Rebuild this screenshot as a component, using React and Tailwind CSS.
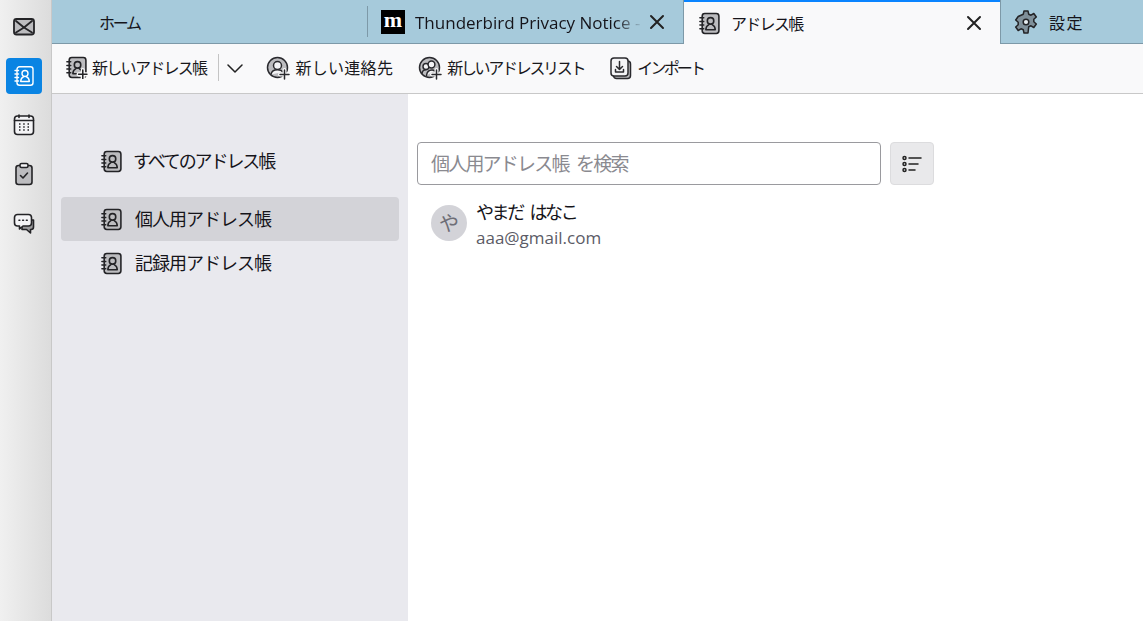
import React from "react";

const jp = "font-['Noto_Sans_CJK_JP','Noto_Sans',sans-serif]";

const Book = ({ plus, fill = "#bcbcbf", stroke = "#232326" }) => (
  <svg width="23" height="23" viewBox="0 0 22 22" fill="none" stroke={stroke} strokeWidth="1.5" strokeLinecap="round" strokeLinejoin="round">
    <rect x="4" y="1.500" width="16" height="19" rx="2.500" fill={fill} />
    <path d="M1.800 5.500h3.700M1.800 9h3.700M1.800 12.500h3.700M1.800 16h3.700" strokeWidth="1.400" />
    <circle cx="12" cy="8.500" r="3.100" />
    <path d="M7.500 17c0-2.800 1-4 3-4.900M16.500 17c0-2.800-1-4-3-4.900M7.500 17h9" />
    {plus && <path d="M17 13.500v8M13 17.500h8" stroke="#f9f9fa" strokeWidth="4" />}
    {plus && <path d="M17 13.500v8M13 17.500h8" stroke="#232326" strokeWidth="1.500" />}
  </svg>
);

const NavIcon = ({ children, active }) => (
  <div className={`flex h-9 w-9 items-center justify-center rounded ${active ? "bg-[#0a84e3]" : ""}`}>{children}</div>
);

const ToolButton = ({ icon, label, className = "", textClass = "" }) => (
  <div className={`flex items-center ${className}`}>
    {icon}
    <span className={`${jp} -translate-y-px text-[16px] text-[#18181b] whitespace-nowrap ${textClass}`}>{label}</span>
  </div>
);

const ContactIcon = () => (
  <svg width="24" height="24" viewBox="0 0 24 24" fill="none" stroke="#2a2a2e" strokeWidth="1.500" strokeLinecap="round">
    <circle cx="11.500" cy="11.500" r="10" fill="#bcbcbf" />
    <circle cx="11.500" cy="9.500" r="4" fill="#f4f4f6" />
    <path d="M5 18.500c.5-3 2.800-4.800 6.500-4.800s4.500.8 5.500 2.300" fill="#f4f4f6" />
    <path d="M18.500 14v9M14 18.500h9" stroke="#f9f9fa" strokeWidth="4" />
    <path d="M18.500 14v9M14 18.500h9" strokeWidth="1.500" />
  </svg>
);

const ListIcon = () => (
  <svg width="24" height="24" viewBox="0 0 24 24" fill="none" stroke="#2a2a2e" strokeWidth="1.500" strokeLinecap="round">
    <circle cx="11.500" cy="11.500" r="10" fill="#bcbcbf" />
    <circle cx="8" cy="10.500" r="3" fill="#f4f4f6" />
    <circle cx="13.500" cy="8.500" r="3.400" fill="#f4f4f6" />
    <path d="M4 17.500c.4-2.500 2-3.800 4-3.800M8.500 19.500c.4-3.500 2.300-5.500 5.500-5.500 1 0 2 .2 2.500.8" fill="#f4f4f6" />
    <path d="M18.500 14v9M14 18.500h9" stroke="#f9f9fa" strokeWidth="4" />
    <path d="M18.500 14v9M14 18.500h9" strokeWidth="1.500" />
  </svg>
);

const ImportIcon = () => (
  <svg width="24" height="24" viewBox="0 0 24 24" fill="none" stroke="#2a2a2e" strokeWidth="1.500" strokeLinecap="round" strokeLinejoin="round">
    <rect x="4.500" y="5" width="17" height="17.500" rx="3" fill="#bcbcbf" />
    <rect x="2" y="2" width="17" height="18" rx="3" fill="#f4f4f6" />
    <path d="M10.500 5.500v8M7.500 10.500l3 3 3-3M6.500 13.500v2.500h8v-2.500" />
  </svg>
);

const Close = () => (
  <svg width="16" height="16" viewBox="0 0 16 16" stroke="#222" strokeWidth="2" strokeLinecap="round">
    <path d="M2 2l12 12M14 2L2 14" />
  </svg>
);

const AddressRow = ({ label, selected, className = "", textClass = "" }) => (
  <div className={`flex h-11 items-center gap-[12px] rounded pl-[39px] ${selected ? "bg-[#d3d3d8]" : ""} ${className}`}>
    <Book />
    <span className={`${jp} -translate-y-px text-[18px] text-[#15141a] whitespace-nowrap ${textClass}`}>{label}</span>
  </div>
);

export default function App() {
  return (
    <div className="flex h-[621px] w-[1143px] overflow-hidden bg-white">
      {/* spaces toolbar */}
      <div className="flex w-[52px] shrink-0 flex-col items-center border-r border-[#c8c8c8] bg-gradient-to-r from-[#f0f0f0] to-[#dcdcdc] pr-[3px] pt-[9px]">
        <div className="flex h-9 w-9 items-center justify-center">
          <svg width="24" height="20" viewBox="0 0 24 20" fill="#bcbcbf" stroke="#232326" strokeWidth="1.800" strokeLinecap="round">
            <rect x="2" y="2" width="20" height="15.500" rx="2.500" />
            <path d="M4 4l8 6.500L20 4M4 15.500l8-5 8 5" fill="none" />
          </svg>
        </div>
        <div className="mt-[13px]">
          <NavIcon active>
            <svg width="22" height="22" viewBox="0 0 22 22" fill="none" stroke="#fff" strokeWidth="1.400" strokeLinecap="round">
              <rect x="4" y="1.800" width="16" height="18.400" rx="2.500" />
              <path d="M2 5.500h3.500M2 9h3.500M2 12.500h3.500M2 16h3.500" />
              <circle cx="12" cy="8.500" r="3" />
              <path d="M7.700 16.500c0-2.600 1-3.800 2.800-4.600M16.300 16.500c0-2.600-1-3.800-2.800-4.600M7.700 16.500h8.600" />
            </svg>
          </NavIcon>
        </div>
        <div className="mt-[13px]">
          <NavIcon>
            <svg width="22" height="22" viewBox="0 0 22 22" fill="#f4f4f6" stroke="#232326" strokeWidth="1.600" strokeLinecap="round">
              <rect x="1.500" y="2" width="19" height="18.500" rx="3" />
              <path d="M1.500 6.500h19M6 1v2.500M16 1v2.500" />
              <path d="M6 10h1.500M10.200 10h1.500M14.500 10h1.500M6 13h1.500M10.200 13h1.500M14.500 13h1.500M6 16h1.500M10.200 16h1.500M14.500 16h1.500" strokeWidth="1.700" strokeLinecap="butt" />
            </svg>
          </NavIcon>
        </div>
        <div className="mt-[13px]">
          <NavIcon>
            <svg width="20" height="24" viewBox="0 0 20 24" fill="#bcbcbf" stroke="#232326" strokeWidth="1.600" strokeLinecap="round" strokeLinejoin="round">
              <rect x="2" y="3.500" width="16" height="19" rx="2.500" />
              <rect x="6" y="1.500" width="8" height="4" rx="1.500" fill="#f4f4f6" />
              <path d="M6.500 13.500l2.500 2.500 4.500-5" fill="none" />
            </svg>
          </NavIcon>
        </div>
        <div className="mt-[13px]">
          <NavIcon>
            <svg width="22" height="22" viewBox="0 0 22 22" fill="#f4f4f6" stroke="#232326" strokeWidth="1.600" strokeLinecap="round" strokeLinejoin="round">
              <path d="M20.500 8v7c0 1.500-1 2.500-2.500 2.500h-.5V21l-4-3.500H9V8z" fill="#9a9a9c" />
              <path d="M4.500 2.500h11c1.700 0 3 1.200 3 3V11c0 1.700-1.300 3-3 3H10l-3.500 3v-3h-2c-1.700 0-3-1.300-3-3V5.500c0-1.800 1.300-3 3-3z" />
              <path d="M6 8.300h.8M9.700 8.300h.8M13.400 8.300h.8" strokeWidth="1.600" />
            </svg>
          </NavIcon>
        </div>
      </div>

      <div className="flex min-w-0 flex-1 flex-col">
        {/* tabs */}
        <div className="flex h-11 shrink-0 items-stretch bg-[#a6cadb]">
          <div className="flex w-[316px] items-center border-b border-[#7d99a8] pl-[47px]">
            <span className={`${jp} text-[16px] tracking-[-2.2px] text-[#15141a]`}>ホーム</span>
            <div className="ml-auto h-[31px] w-px bg-[#7d99a8]" />
          </div>
          <div className="flex w-[316px] items-center border-b border-r border-[#7d99a8] pl-[13px] pr-[18px]">
            <div className="flex h-6 w-6 shrink-0 items-center justify-center bg-black font-['Liberation_Serif',serif] text-[22px] font-bold leading-none text-white">
              <span className="-mt-1">m</span>
            </div>
            <span className="ml-[10px] mt-[3px] w-[228px] whitespace-nowrap font-['Open_Sans',sans-serif] text-[17px] text-[#15141a] [mask-image:linear-gradient(to_right,black_88%,transparent)]">
              Thunderbird Privacy Notice -
            </span>
            <div className="ml-auto"><Close /></div>
          </div>
          <div className="flex w-[316px] items-center border-t-2 border-[#0a84ff] bg-[#f9f9fa] pl-[14px] pr-[18px]">
            <Book />
            <span className={`${jp} ml-[10px] text-[16px] tracking-[-1.700px] text-[#15141a]`}>アドレス帳</span>
            <div className="ml-auto"><Close /></div>
          </div>
          <div className="flex flex-1 items-center gap-[11px] border-b border-l border-[#7d99a8] pl-[13px]">
            <svg width="24" height="24" viewBox="0 0 24 24" fill="#7f8f99" stroke="#232326" strokeWidth="1.500" strokeLinejoin="round">
              <path d="M10 1h4l.7 3.200 2.300 1 2.800-1.700 2.500 3.500-2.500 2.200v2.600l2.500 2.200-2.500 3.500-2.800-1.700-2.300 1L14 23h-4l-.7-3.200-2.300-1-2.800 1.700-2.500-3.500 2.500-2.200V12.200L1.700 10l2.500-3.500L7 5.200l2.300-1z" />
              <circle cx="12" cy="12" r="2.800" fill="#e8eef2" />
            </svg>
            <span className={`${jp} text-[16px] tracking-[1.500px] text-[#15141a]`}>設定</span>
          </div>
        </div>

        {/* toolbar */}
        <div className="flex h-[50px] shrink-0 items-center border-b border-[#c8c8c8] bg-[#f9f9fa] pb-[2px] pl-[13px]">
          <ToolButton icon={<Book plus />} label="新しいアドレス帳" className="gap-[4px]" textClass="tracking-[-1.700px]" />
          <div className="ml-[12px] h-[27px] w-px bg-[#c4c4c4]" />
          <svg className="ml-[8px]" width="16" height="16" viewBox="0 0 16 16" fill="none" stroke="#222" strokeWidth="1.500" strokeLinecap="round" strokeLinejoin="round">
            <path d="M1 5l7 7 7-7" />
          </svg>
          <ToolButton className="ml-[23px] gap-[5px]" icon={<ContactIcon />} label="新しい連絡先" textClass="tracking-[0.300px]" />
          <ToolButton className="ml-[25px] gap-[5px]" icon={<ListIcon />} label="新しいアドレスリスト" textClass="tracking-[-2.300px]" />
          <ToolButton className="ml-[25px] gap-[4px]" icon={<ImportIcon />} label="インポート" textClass="tracking-[-2.800px]" />
        </div>

        <div className="flex min-h-0 flex-1">
          {/* address books */}
          <div className="w-[356px] shrink-0 bg-[#e9e9ee] pl-[9px] pr-[9px] pt-[45px]">
            <AddressRow label="すべてのアドレス帳" textClass="-ml-[2px] tracking-[-2.100px]" />
            <AddressRow className="mt-[14px]" label="個人用アドレス帳" selected textClass="tracking-[-1px]" />
            <AddressRow label="記録用アドレス帳" textClass="tracking-[-1px]" />
          </div>

          {/* contacts */}
          <div className="flex-1 bg-white pl-[9px] pt-[48px]">
            <div className="flex items-center gap-[9px]">
              <div className={`${jp} flex h-[43px] w-[464px] items-center rounded-[4px] border border-[#9a9a9e] pl-[13px] text-[19px] tracking-[-1.800px] [word-spacing:5px] text-[#8a8a90]`}>
                個人用アドレス帳 を検索
              </div>
              <div className="flex h-[43px] w-[44px] items-center justify-center rounded-[4px] border border-[#dcdcde] bg-[#e9e9eb]">
                <svg width="20" height="18" viewBox="0 0 20 18" fill="none" stroke="#222" strokeWidth="1.500" strokeLinecap="round">
                  <circle cx="2.500" cy="3" r="1.500" />
                  <circle cx="2.500" cy="9" r="1.500" />
                  <circle cx="2.500" cy="15" r="1.500" />
                  <path d="M7 3h12M7 9h9M7 15h6" />
                </svg>
              </div>
            </div>
            <div className="mt-[12px] flex items-start pl-[14px]">
              <div className={`${jp} mt-[8px] flex h-9 w-9 items-center justify-center rounded-full bg-[#d3d3d8] text-[20px] text-[#6e6e76]`}>や</div>
              <div className="ml-[10px] mt-[1px]">
                <div className={`${jp} -ml-px text-[18px] leading-[26px] tracking-[-2.400px] [word-spacing:5px] text-[#15141a]`}>やまだ はなこ</div>
                <div className="-ml-px mt-[1px] font-['Open_Sans',sans-serif] text-[17px] leading-[26px] text-[#5b5b66]">aaa@gmail.com</div>
              </div>
            </div>
          </div>
        </div>
      </div>
    </div>
  );
}
